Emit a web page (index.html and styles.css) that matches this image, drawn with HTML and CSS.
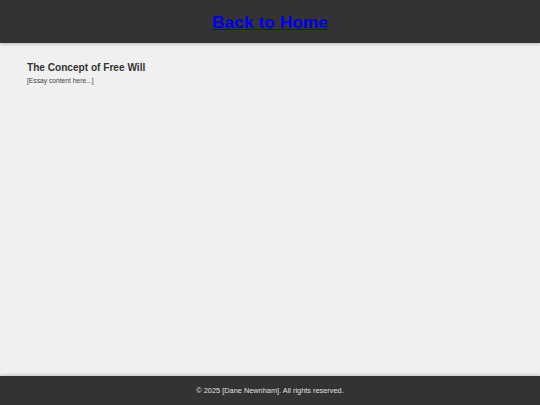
FILE: index.html
```html
<!DOCTYPE html>
<html lang="en">
<head>
<meta charset="utf-8">
<title>The Concept of Free Will</title>
<link rel="stylesheet" href="styles.css">
</head>
<body>
<header class="site-header">
  <a class="home-link" href="#">Back to Home</a>
</header>
<main class="essay">
  <h2 class="essay-title">The Concept of Free Will</h2>
  <p class="essay-body">[Essay content here...]</p>
</main>
<footer class="site-footer">
  <p class="footer-text">&copy; 2025 [Dane Newnham]. All rights reserved.</p>
</footer>
</body>
</html>
```
FILE: styles.css
```css
html, body {
  margin: 0;
  padding: 0;
}
body {
  min-height: 100vh;
  display: flex;
  flex-direction: column;
  background: #f0f0f0;
  font-family: "Liberation Sans", Arial, sans-serif;
  color: #333;
}
.site-header {
  box-sizing: border-box;
  height: 43px;
  padding-top: 2px;
  background: #333;
  display: flex;
  align-items: center;
  justify-content: center;
  box-shadow: 0 1px 3px rgba(0,0,0,0.25);
}
.home-link {
  color: #0000ee;
  font-weight: bold;
  font-size: 17.4px;
  text-decoration: underline;
}
.essay {
  flex: 1;
  padding: 19px 27px 0;
}
.essay-title {
  margin: 0;
  font-size: 10.1px;
  font-weight: bold;
  color: #333;
  line-height: 12px;
}
.essay-body {
  margin: 3px 0 0;
  font-size: 6.7px;
  line-height: 8px;
  color: #444;
}
.site-footer {
  height: 29px;
  background: #333;
  display: flex;
  align-items: center;
  justify-content: center;
  box-shadow: 0 -1px 3px rgba(0,0,0,0.2);
}
.footer-text {
  margin: 0;
  font-size: 7.37px;
  color: #e0e0e0;
}
```
